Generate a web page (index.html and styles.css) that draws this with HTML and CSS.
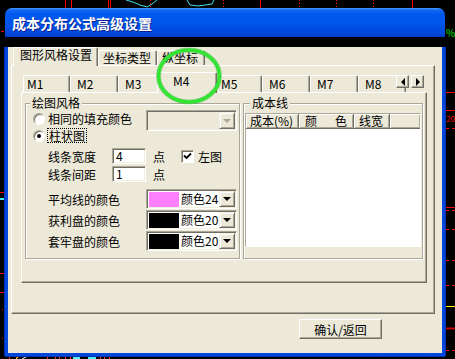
FILE: index.html
```html
<!DOCTYPE html>
<html lang="zh-CN">
  <head>
    <meta charset="UTF-8" />
    <title>成本分布公式高级设置</title>
    <link rel="stylesheet" href="styles.css">
  </head>
  <body>
    <svg class="chart" width="455" height="359" viewBox="0 0 455 359">
      <g stroke="#ff0000" stroke-width="1">
        <line x1="65.5" y1="0" x2="65.5" y2="9" />
        <line x1="71.5" y1="0" x2="71.5" y2="9" />
        <line x1="108.5" y1="0" x2="108.5" y2="9" />
        <line x1="110.5" y1="0" x2="110.5" y2="9" />
        <line x1="260.5" y1="0" x2="260.5" y2="9" />
        <line x1="412.5" y1="0" x2="412.5" y2="9" />
      </g>
      <g stroke="#ff0000" stroke-width="1" stroke-dasharray="1 2">
        <line x1="150.5" y1="0" x2="150.5" y2="9" />
        <line x1="223.5" y1="0" x2="223.5" y2="9" />
        <line x1="299.5" y1="0" x2="299.5" y2="9" />
        <line x1="336.5" y1="0" x2="336.5" y2="9" />
        <line x1="373.5" y1="0" x2="373.5" y2="9" />
      </g>
      <g fill="none" stroke="#40e0f0" stroke-width="1">
        <polyline points="126,0 133,2 140,5 147,7 152,4 157,0" />
        <polyline points="187,0 190,5 198,6 205,5 212,4 214,0" />
      </g>
      <text x="446" y="37" fill="#00e000" font-size="10">%</text>

      <g stroke="#ff0000" stroke-width="1">
        <line x1="446" y1="92.5" x2="455" y2="92.5" />
        <line x1="446" y1="110.5" x2="455" y2="110.5" />
        <line x1="446" y1="207.5" x2="455" y2="207.5" />
        <line x1="0" y1="192.5" x2="5" y2="192.5" />
        <line x1="0" y1="273.5" x2="5" y2="273.5" />
        <line x1="0" y1="292.5" x2="5" y2="292.5" />
        <line x1="1" y1="31.5" x2="4" y2="31.5" />
      </g>
      <g stroke="#ff0000" stroke-width="1" stroke-dasharray="3 3">
        <line x1="446" y1="128.5" x2="455" y2="128.5" />
        <line x1="446" y1="210.5" x2="455" y2="210.5" />
        <line x1="446" y1="229.5" x2="455" y2="229.5" />
        <line x1="446" y1="260.5" x2="455" y2="260.5" />
        <line x1="446" y1="285.5" x2="455" y2="285.5" />
        <line x1="446" y1="350.5" x2="455" y2="350.5" />
      </g>
      <line x1="446" y1="306.5" x2="455" y2="306.5" stroke="#ffff00" />
      <line x1="446" y1="328.5" x2="455" y2="328.5" stroke="#c00000" stroke-width="2" />
      <text x="446" y="122" fill="#ff0000" font-size="8">20</text>
      <rect x="0" y="198" width="5" height="2" fill="#40f0f0" />
      <rect x="2" y="309" width="1" height="1" fill="#ff0000" />
      <rect x="2" y="338" width="1" height="1" fill="#ff0000" />

      <rect x="9.5" y="352.5" width="7" height="8" fill="none" stroke="#ff3030" />
      <line x1="16" y1="359" x2="29" y2="347" stroke="#ffff00" />
      <line x1="22" y1="359" x2="47" y2="346" stroke="#ffffff" />
      <g stroke="#ff3030" stroke-width="1">
        <line x1="47.5" y1="347" x2="47.5" y2="359" />
        <line x1="55.5" y1="347" x2="55.5" y2="359" />
        <line x1="59.5" y1="347" x2="59.5" y2="359" />
        <line x1="65.5" y1="347" x2="65.5" y2="359" />
        <line x1="70.5" y1="347" x2="70.5" y2="359" />
        <line x1="100.5" y1="347" x2="100.5" y2="359" />
        <line x1="104.5" y1="347" x2="104.5" y2="359" />
        <line x1="109.5" y1="347" x2="109.5" y2="359" />
      </g>
      <rect x="73" y="347" width="7" height="12" fill="#50f0f8" />
      <rect x="88" y="347" width="8" height="12" fill="#50f0f8" />
      <text x="120" y="356" fill="#ffff00" font-size="9">上盘比</text>
      <text x="370" y="356" fill="#ffffff" font-size="9">增减比</text>
      <text x="417" y="356" fill="#ffffff" font-size="9">增减股</text>
    </svg>

    <div class="dialog">
      <div class="titlebar">成本分布公式高级设置</div>
      <div class="client">
        <div class="otabs">
          <div class="otab active">图形风格设置</div>
          <div class="otab type">坐标类型</div>
          <div class="otab axis">纵坐标</div>
        </div>
        <div class="opanel">
          <div class="itabs">
            <div class="itab first">M1</div>
            <div class="itab">M2</div>
            <div class="itab">M3</div>
            <div class="itab active">M4</div>
            <div class="itab">M5</div>
            <div class="itab">M6</div>
            <div class="itab">M7</div>
            <div class="itab">M8</div>
            <div class="spin">
              <div class="spin-btn"><span class="tri-left"></span></div>
              <div class="spin-btn"><span class="tri-right"></span></div>
            </div>
          </div>
          <div class="ipanel">
            <fieldset class="group style-group">
              <legend>绘图风格</legend>
              <div class="row r1">
                <span class="radio"></span>
                <span class="label wide">相同的填充颜色</span>
                <div class="combo disabled">
                  <span class="drop"><span class="tri-down"></span></span>
                </div>
              </div>
              <div class="row r2">
                <span class="radio checked"></span>
                <span class="focus">柱状图</span>
              </div>
              <div class="row r3 indent">
                <span class="label">线条宽度</span>
                <span class="edit">4</span>
                <span class="unit">点</span>
                <span class="check">
                  <svg width="11" height="11" viewBox="0 0 11 11">
                    <path d="M2 4.5 L4.5 7 L9 2.5" fill="none" stroke="#000" stroke-width="1.8" />
                  </svg>
                </span>
                <span class="check-label">左图</span>
              </div>
              <div class="row r4 indent">
                <span class="label">线条间距</span>
                <span class="edit">1</span>
                <span class="unit">点</span>
              </div>
              <div class="row r5 indent">
                <span class="label wide">平均线的颜色</span>
                <div class="combo">
                  <span class="swatch" style="background: #ff80ff"></span>
                  <span class="combo-text">颜色24</span>
                  <span class="drop"><span class="tri-down"></span></span>
                </div>
              </div>
              <div class="row r6 indent">
                <span class="label wide">获利盘的颜色</span>
                <div class="combo">
                  <span class="swatch" style="background: #000000"></span>
                  <span class="combo-text">颜色20</span>
                  <span class="drop"><span class="tri-down"></span></span>
                </div>
              </div>
              <div class="row r6 indent">
                <span class="label wide">套牢盘的颜色</span>
                <div class="combo">
                  <span class="swatch" style="background: #000000"></span>
                  <span class="combo-text">颜色20</span>
                  <span class="drop"><span class="tri-down"></span></span>
                </div>
              </div>
            </fieldset>

            <fieldset class="group line-group">
              <legend>成本线</legend>
              <div class="listview">
                <div class="header">
                  <span class="col c1">成本(%)</span>
                  <span class="col c2"><span class="spread">颜</span>色</span>
                  <span class="col c3">线宽</span>
                  <span class="col c4"></span>
                </div>
              </div>
            </fieldset>
          </div>
        </div>
        <div class="footer">
          <button class="btn">确认/返回</button>
        </div>
      </div>
    </div>

    <svg class="mark" width="455" height="359" viewBox="0 0 455 359">
      <ellipse cx="189" cy="76" rx="30.5" ry="26" fill="none" stroke="#1a9a1a" stroke-width="5" opacity="0.35" />
      <ellipse cx="189" cy="76" rx="30.5" ry="26" fill="none" stroke="#33e533" stroke-width="3.5" />
    </svg>
  </body>
</html>
```

FILE: styles.css
```css
* {
  box-sizing: border-box;
}

body {
  position: relative;
  width: 455px;
  height: 359px;
  margin: 0;
  overflow: hidden;
  background: #000;
  font-family: "Noto Sans CJK SC", sans-serif;
  font-size: 12px;
  color: #000;
}

.chart,
.mark {
  position: absolute;
  left: 0;
  top: 0;
}

.mark {
  z-index: 5;
  pointer-events: none;
}

.dialog {
  position: relative;
  z-index: 1;
  width: 440px;
  height: 338px;
  margin: 8px 0 0 5px;
}

.titlebar {
  height: 29px;
  padding: 1px 0 0 7px;
  border-radius: 7px 7px 0 0;
  background: linear-gradient(
    to bottom,
    #4a9bff 0,
    #1467f0 2px,
    #0058ee 6px,
    #0055ea 50%,
    #0049db 85%,
    #003cc8 100%
  );
  color: #fff;
  font-size: 14px;
  font-weight: bold;
  line-height: 28px;
  text-shadow: 1px 1px #0a1e8a;
}

.client {
  height: 309px;
  background: #ece9d8;
  border: 3px solid #0048dc;
  border-top: 0;
  box-shadow: -1px 0 #0030b0, 1px 0 #0030b0, 0 1px #0030b0;
}

/* outer tabs */
.otabs {
  display: flex;
  align-items: flex-end;
  height: 18px;
  margin-top: 10px;
  padding-left: 5px;
}

.otab {
  height: 15px;
  padding: 0 0 0 4px;
  border-top: 1px solid #fff;
  border-left: 1px solid #fff;
  border-right: 1px solid #716f64;
  border-radius: 2px 2px 0 0;
  box-shadow: inset -1px 0 #aca899;
  line-height: 14px;
  white-space: nowrap;
}

.otab.active {
  position: relative;
  z-index: 2;
  width: 85px;
  height: 19px;
  margin-bottom: -1px;
  padding-left: 6px;
  background: #ece9d8;
}

.otab.type {
  width: 59px;
}

.otab.axis {
  width: 48px;
}

.opanel {
  width: 424px;
  height: 249px;
  margin-left: 3px;
  border: 1px solid;
  border-color: #fff #716f64 #716f64 #fff;
  box-shadow: inset -1px -1px #aca899;
}

/* inner tabs */
.itabs {
  position: relative;
  display: flex;
  align-items: flex-end;
  width: 401px;
  height: 20px;
  margin: 6px 0 0 11px;
}

.itab {
  flex: none;
  width: 48px;
  height: 17px;
  padding-left: 6px;
  border-top: 1px solid #fff;
  border-left: 1px solid #fff;
  border-right: 1px solid #716f64;
  border-radius: 2px 2px 0 0;
  box-shadow: inset -1px 0 #aca899;
  line-height: 15px;
}

.itab.first {
  width: 47px;
  padding-left: 3px;
}

.itab.active {
  position: relative;
  z-index: 2;
  width: 60px;
  height: 21px;
  margin: 0 -3px -1px -9px;
  padding-left: 15px;
  background: #ece9d8;
}

.spin {
  position: absolute;
  right: 0;
  top: 3px;
  z-index: 3;
  display: flex;
  gap: 2px;
}

.spin-btn {
  display: flex;
  align-items: center;
  justify-content: center;
  width: 13px;
  height: 13px;
  background: #ece9d8;
  border: 1px solid;
  border-color: #fff #716f64 #716f64 #fff;
  box-shadow: inset -1px -1px #aca899;
}

.tri-left {
  border-top: 4px solid transparent;
  border-bottom: 4px solid transparent;
  border-right: 4px solid #000;
}

.tri-right {
  border-top: 4px solid transparent;
  border-bottom: 4px solid transparent;
  border-left: 4px solid #000;
}

.tri-down {
  border-left: 4px solid transparent;
  border-right: 4px solid transparent;
  border-top: 4px solid #000;
}

.ipanel {
  display: flex;
  gap: 3px;
  width: 406px;
  height: 191px;
  margin-left: 9px;
  padding: 3px 0 0 3px;
  border: 1px solid;
  border-color: #fff #716f64 #716f64 #fff;
  box-shadow: inset -1px -1px #aca899;
}

/* group boxes */
.group {
  min-width: 0;
  height: 163px;
  margin: 0;
  padding: 0;
  border: 1px solid #aca899;
  box-shadow: inset 1px 1px #fff, 1px 1px #fff;
}

.group legend {
  margin-left: 4px;
  padding: 0 2px;
  line-height: 14px;
  background: #ece9d8;
}

.style-group {
  width: 215px;
}

.line-group {
  width: 180px;
}

.line-group legend {
  margin-left: 6px;
}

.row {
  display: flex;
  align-items: center;
  white-space: nowrap;
}

.r1 {
  height: 17px;
  padding-left: 7px;
}

.r2 {
  height: 17px;
  padding-left: 7px;
}

.r3 {
  height: 16px;
  margin-top: 4px;
}

.r4 {
  height: 16px;
  margin-top: 2px;
}

.r5 {
  height: 20px;
  margin-top: 7px;
}

.r6 {
  height: 20px;
  margin-top: 1px;
}

.indent {
  padding-left: 22px;
}

.label {
  width: 64px;
}

.label.wide {
  width: 98px;
}

.r1 .label {
  margin-left: 3px;
}

.r1 .combo {
  align-self: flex-start;
  height: 21px;
}

.radio {
  position: relative;
  width: 12px;
  height: 12px;
  border-radius: 50%;
  background: #fff;
  border: 1px solid;
  border-color: #aca899 #fff #fff #aca899;
  box-shadow: inset 1px 1px #716f64;
}

.radio.checked::after {
  content: "";
  position: absolute;
  left: 3px;
  top: 3px;
  width: 4px;
  height: 4px;
  border-radius: 50%;
  background: #000;
}

.focus {
  margin-left: 2px;
  padding: 0 1px;
  border: 1px dotted #000;
  line-height: 13px;
}

.edit {
  width: 34px;
  height: 16px;
  padding-left: 3px;
  background: #fff;
  border: 1px solid;
  border-color: #aca899 #fff #fff #aca899;
  box-shadow: inset 1px 1px #716f64, inset -1px -1px #f1efe2;
  line-height: 14px;
}

.unit {
  margin-left: 7px;
}

.check {
  display: flex;
  align-items: center;
  justify-content: center;
  width: 13px;
  height: 13px;
  margin-left: 16px;
  background: #fff;
  border: 1px solid;
  border-color: #aca899 #fff #fff #aca899;
  box-shadow: inset 1px 1px #716f64;
}

.check-label {
  margin-left: 4px;
}

.combo {
  display: flex;
  align-items: stretch;
  width: 91px;
  height: 20px;
  padding: 1px;
  background: #fff;
  border: 1px solid;
  border-color: #aca899 #fff #fff #aca899;
  box-shadow: inset 1px 1px #716f64, inset -1px -1px #f1efe2;
}

.combo.disabled {
  justify-content: flex-end;
  background: #ece9d8;
}

.combo.disabled .tri-down {
  border-top-color: #aca899;
}

.swatch {
  width: 30px;
  margin: 1px 0 0 1px;
}

.combo-text {
  flex: 1;
  margin-left: 2px;
  line-height: 16px;
}

.drop {
  display: flex;
  align-items: center;
  justify-content: center;
  width: 16px;
  background: #ece9d8;
  border: 1px solid;
  border-color: #f1efe2 #716f64 #716f64 #f1efe2;
  box-shadow: inset 1px 1px #fff, inset -1px -1px #aca899;
}

/* list view */
.listview {
  height: 134px;
  margin: 3px 1px 0 1px;
  background: #fff;
  border: 1px solid;
  border-color: #aca899 #fff #fff #aca899;
}

.header {
  display: flex;
  height: 15px;
}

.col {
  flex: none;
  padding-left: 4px;
  background: #ece9d8;
  border-right: 1px solid #716f64;
  border-bottom: 1px solid #716f64;
  box-shadow: inset 1px 1px #fff, inset -1px -1px #aca899;
  line-height: 14px;
}

.c1 {
  width: 53px;
}

.c2 {
  width: 55px;
  padding-left: 6px;
}

.c3 {
  width: 36px;
  padding-left: 5px;
}

.c4 {
  flex: 1;
  border-right: 0;
}

.spread {
  margin-right: 18px;
}

/* footer */
.footer {
  padding: 5px 0 0 291px;
}

.btn {
  display: block;
  width: 83px;
  height: 20px;
  padding: 0;
  font-family: inherit;
  font-size: 12px;
  color: #000;
  background: #ece9d8;
  border: 1px solid;
  border-color: #fff #716f64 #716f64 #fff;
  box-shadow: inset -1px -1px #aca899;
}
```
